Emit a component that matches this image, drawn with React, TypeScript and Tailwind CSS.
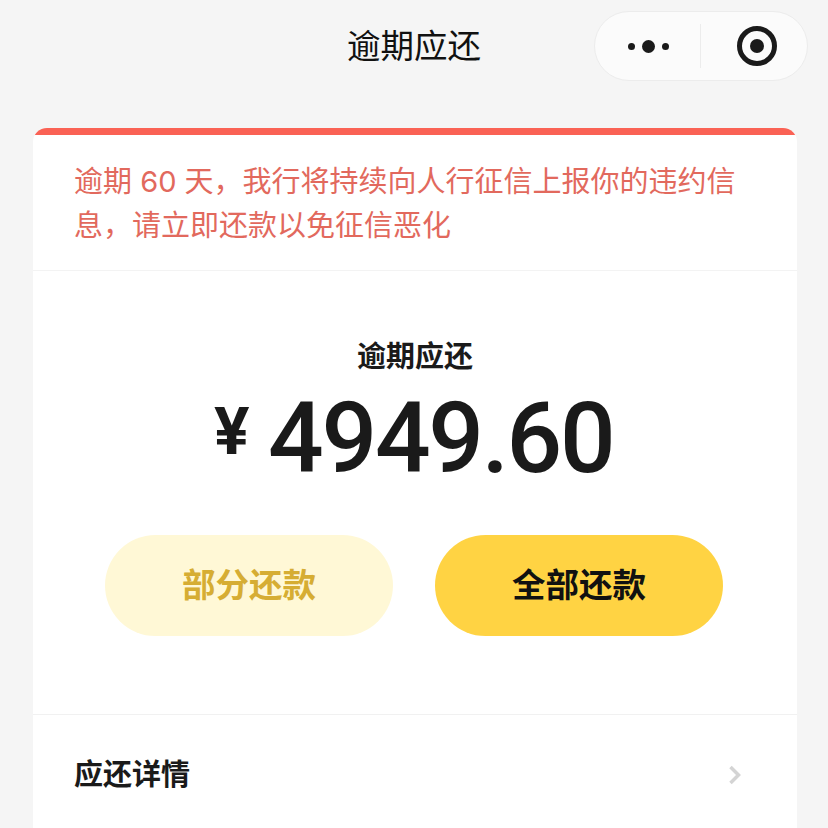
import React from "react";

const cjk = "font-['Inter','Noto_Sans_CJK_SC',sans-serif]";

function Capsule() {
  return (
    <div className="flex h-[70px] w-[214px] items-center rounded-full border border-[#ececec] bg-[#fbfbfb]">
      <div className="flex flex-1 items-center justify-center gap-[7px] pl-[1px]">
        <span className="h-[7px] w-[7px] rounded-full bg-[#1a1a1a]" />
        <span className="h-[13px] w-[13px] rounded-full bg-[#1a1a1a]" />
        <span className="h-[7px] w-[7px] rounded-full bg-[#1a1a1a]" />
      </div>
      <div className="h-[44px] w-px bg-[#ececec]" />
      <div className="flex w-[106px] items-center justify-center pl-[6px]">
        <div className="flex h-[40px] w-[40px] items-center justify-center rounded-full border-[5px] border-[#1a1a1a]">
          <span className="h-[14px] w-[14px] rounded-full bg-[#1a1a1a]" />
        </div>
      </div>
    </div>
  );
}

export default function App() {
  return (
    <div className={`h-[828px] w-[828px] overflow-hidden bg-[#f5f5f5] ${cjk}`}>
      {/* Nav bar */}
      <div className="relative flex h-[128px] items-start justify-center">
        <h1 className="mt-[25px] text-[33.5px] leading-[42px] text-[#111111]">逾期应还</h1>
        <div className="absolute right-[20px] top-[11px]">
          <Capsule />
        </div>
      </div>

      {/* Card */}
      <div className="mx-[33px] w-[764px] overflow-hidden rounded-t-[14px] bg-white">
        <div className="h-[7px] bg-[#fa6255]" />
        <div className="border-b border-[#f3f3f3] px-[41px] pb-[22px] pt-[25px] text-[29px] leading-[44px] text-[#e2695d]">
          逾期 60 天，我行将持续向人行征信上报你的违约信息，请立即还款以免征信恶化
        </div>

        <div className="flex h-[444px] flex-col items-center border-b border-[#f1f1f1]">
          <div className="mt-[66px] text-[29px] font-bold leading-[40px] text-[#1a1a1a]">逾期应还</div>
          <div className="mt-[12px] flex h-[100px] items-start text-[#1a1a1a]">
            <span className="mt-[2px] text-[64px] font-bold leading-[80px]">¥</span>
            <span className="ml-[18px] mr-[3px] font-['Roboto'] text-[98px] font-medium leading-[100px] tracking-[-2.3px]">4949.60</span>
          </div>
          <div className="mr-[2px] mt-[46px] flex gap-[42px]">
            <button className="flex h-[101px] w-[288px] items-center justify-center rounded-full bg-[#fff8d6] text-[33.5px] font-bold text-[#d6ad33]">
              部分还款
            </button>
            <button className="flex h-[101px] w-[288px] items-center justify-center rounded-full bg-[#ffd343] text-[33.5px] font-bold text-[#111111]">
              全部还款
            </button>
          </div>
        </div>

        <div className="flex h-[120px] items-center justify-between pl-[41px] pr-[55px]">
          <span className="text-[29px] font-bold text-[#1a1a1a]">应还详情</span>
          <svg width="14" height="20" viewBox="0 0 14 20" fill="none" stroke="#d4d4d4" strokeWidth="3.5">
            <path d="M2.5 2l8 8-8 8" />
          </svg>
        </div>
      </div>
    </div>
  );
}
